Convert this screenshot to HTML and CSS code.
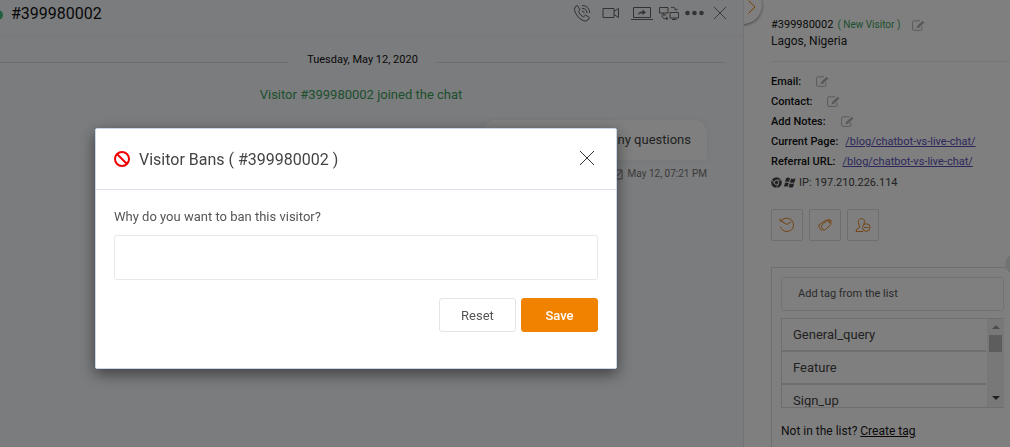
FILE: index.html
```
<!DOCTYPE html>
<html lang="en">
<head>
    <meta charset="UTF-8">
    <meta name="viewport" content="width=device-width, initial-scale=1.0">
    <title>Visitor Bans</title>
    <link rel="stylesheet" href="styles.css">
</head>
<body>
    <!-- shared icons -->
    <svg class="sprite" aria-hidden="true">
        <symbol id="edit" viewBox="0 0 13 11">
            <path d="M8 .8H2Q.6.8.6 2.200V9Q.6 10.400 2 10.400H8.500Q9.900 10.400 9.900 9V6.500" fill="none" stroke="currentColor"/>
            <path d="M4.600 8.200L5.100 6L10.600.7L12.500 2.500L7 7.700Z" fill="currentColor"/>
        </symbol>
        <symbol id="close" viewBox="0 0 16 16">
            <path d="M1 1L15 15M15 1L1 15" fill="none" stroke="currentColor"/>
        </symbol>
    </svg>

    <div class="page">
        <div class="chat">
            <header class="chat-head">
                <span class="online"></span>
                <h1>#399980002</h1>
                <div class="tools">
                    <button type="button" aria-label="Call"><svg width="18" height="18" viewBox="0 0 18 18"><path d="M4.500 1.500L2 3Q.5 5 2.500 9Q5 14.500 10 16.500Q13.500 18 15 16L16.500 13.500L12.500 11L10.500 13Q7 11.500 5.500 7.500L7 6ZM9 7Q11 7 11.200 9.200M9 4.300Q13.500 4.300 14 9M9 1.500Q16 1.500 16.800 9"/></svg></button>
                    <button type="button" aria-label="Video"><svg width="18" height="12" viewBox="0 0 18 12"><path d="M1 1.500H12V10.500H1ZM12 4.500L16.500 1.500V10.500L12 7.500"/></svg></button>
                    <button type="button" aria-label="Share screen"><svg width="22" height="14" viewBox="0 0 22 14"><path d="M2.500 11.500V1.500H19.500V11.500ZM0 13.500H22"/><path class="solid" d="M7 9Q7 5.500 11.500 5.500V3.500L15 6.500L11.500 9V7.300Q8.500 7.200 7 9Z"/></svg></button>
                    <button type="button" aria-label="Transfer"><svg width="20" height="14" viewBox="0 0 20 14"><path d="M.5 1.500H9V7H.5ZM4.700 7V8.800M2.500 9H7M11 6.500H19.500V12H11ZM15.200 12V13.400M13 13.500H17.500M12 1.500Q16 .5 17 4M15.300 2.800L17 4.500L18.500 2.800M3 10Q4 13.500 8.500 12.500M7 11L9 12.500L7 14"/></svg></button>
                    <button type="button" aria-label="More"><svg width="20" height="6" viewBox="0 0 20 6"><circle class="solid" cx="2.500" cy="3" r="2.300"/><circle class="solid" cx="9.500" cy="3" r="2.300"/><circle class="solid" cx="16.500" cy="3" r="2.300"/></svg></button>
                    <button type="button" aria-label="Close chat"><svg width="14" height="14"><use href="#close"/></svg></button>
                </div>
            </header>
            <div class="messages">
                <div class="date">Tuesday, May 12, 2020</div>
                <p class="joined">Visitor #399980002 joined the chat</p>
                <div class="bubble">Feel free to ask me any questions</div>
                <div class="time">
                    <svg width="10" height="11" viewBox="0 0 10 11"><path d="M1 1H9V10H1ZM3 4L5 6.500L8 2" fill="none" stroke="currentColor"/></svg>
                    May 12, 07:21 PM
                </div>
            </div>
        </div>

        <aside class="side">
            <button type="button" class="toggle" aria-label="Hide details"><svg width="8" height="14" viewBox="0 0 8 14"><path d="M.6.6L7 7L.6 13.400"/></svg></button>
            <div class="visitor">
                <div class="name"><b>#399980002</b><span>( New Visitor )</span><svg class="edit"><use href="#edit"/></svg></div>
                <div class="place">Lagos, Nigeria</div>
            </div>
            <div class="details">
                <div class="row"><b>Email:</b><svg class="edit"><use href="#edit"/></svg></div>
                <div class="row"><b>Contact:</b><svg class="edit"><use href="#edit"/></svg></div>
                <div class="row"><b>Add Notes:</b><svg class="edit"><use href="#edit"/></svg></div>
                <div class="row"><b>Current Page:</b><a href="#">/blog/chatbot-vs-live-chat/</a></div>
                <div class="row"><b>Referral URL:</b><a href="#">/blog/chatbot-vs-live-chat/</a></div>
                <div class="row ip">
                    <svg width="11" height="11" viewBox="0 0 11 11"><circle cx="5.500" cy="5.500" r="5.300" fill="currentColor"/><path d="M5.500 3H10.500M3.300 6.700L1 2.700M7.700 6.700L5.200 10.800" stroke="#fff" stroke-width=".8"/><circle cx="5.500" cy="5.500" r="2.200" fill="currentColor" stroke="#fff"/></svg>
                    <svg width="12" height="11" viewBox="0 0 12 11"><path d="M2 1.200Q4 0 6 1.200L5 5Q3 4 1 5ZM7 1.500Q9 2.500 11.500 1.300L10.500 5.200Q8.500 6.200 6 5.200ZM.8 6Q2.800 5 4.700 6L3.700 9.700Q2 8.700 0 9.700ZM5.700 6.300Q8 7.300 10.200 6.300L9.200 10Q7 11.200 4.700 10Z" fill="currentColor"/></svg>
                    <span>IP:</span><span>197.210.226.114</span>
                </div>
            </div>
            <div class="actions">
                <button type="button" aria-label="History"><svg viewBox="0 0 16 16"><path d="M2 3.500Q5 .8 8.500 1.200Q14.300 2 14.500 8Q14.200 14 8 14.500Q3 14.300 1.300 9.500M1 1.500L1.300 4.300L4.300 4.300M3.500 5L8 7.500L12.500 4.500"/></svg></button>
                <button type="button" aria-label="Tags"><svg viewBox="0 0 16 16"><path d="M5.500 7.500L10 3.500L14 3L13.800 7.500L8.500 12.500Q7 13.500 6 12.500L4.700 10.500Q4 9 5.500 7.500ZM5.500 13.300L3.500 12.700Q1.300 9.500 1.800 8L8 3.800L12 2.500"/><circle cx="12.300" cy="5" r=".7"/></svg></button>
                <button type="button" aria-label="Ban visitor"><svg viewBox="0 0 16 16"><path d="M8 14.500H1Q1 11.500 4.500 10.500Q5 9.500 4 8Q1.800 2 6.500 1.500Q11 1.800 8.800 7.500"/><circle cx="11.300" cy="10.500" r="3.800"/><path d="M9 10.500H13.600"/></svg></button>
            </div>
            <div class="tags">
                <span class="knob"></span>
                <input type="text" class="tag-input" placeholder="Add tag from the list" aria-label="Add tag from the list">
                <div class="tag-list">
                    <ul>
                        <li>General_query</li>
                        <li>Feature</li>
                        <li>Sign_up</li>
                    </ul>
                    <div class="scroll">
                        <i class="up"></i>
                        <i class="thumb"></i>
                        <i class="down"></i>
                    </div>
                </div>
                <p class="create">Not in the list? <a href="#">Create tag</a></p>
            </div>
        </aside>
    </div>

    <div class="overlay">
        <form class="modal" role="dialog" aria-labelledby="ban-title">
            <div class="modal-head">
                <svg width="16" height="16" viewBox="0 0 16 16"><path d="M3 3L13 13" stroke="#f00000" stroke-width="2"/><circle cx="8" cy="8" r="7" fill="none" stroke="#f00000" stroke-width="2"/></svg>
                <h2 id="ban-title">Visitor Bans ( #399980002 )</h2>
                <button type="button" class="close" aria-label="Close"><svg width="16" height="16"><use href="#close"/></svg></button>
            </div>
            <div class="modal-body">
                <label for="reason">Why do you want to ban this visitor?</label>
                <input type="text" id="reason">
                <div class="buttons">
                    <button type="reset" class="btn">Reset</button>
                    <button type="submit" class="btn save">Save</button>
                </div>
            </div>
        </form>
    </div>
</body>
</html>
```
FILE: styles.css
```
* {
    box-sizing: border-box;
}
body {
    margin: 0;
    overflow: hidden;
    font-family: Roboto, "Liberation Sans", sans-serif;
    font-size: 13px;
    color: #444;
}
h1, h2, p, ul {
    margin: 0;
    padding: 0;
}
button, input {
    font-family: inherit;
}
button {
    padding: 0;
    border: 0;
    background: none;
    cursor: pointer;
}
b {
    font-weight: 500;
}
svg {
    display: block;
    flex: none;
}
.sprite {
    position: absolute;
    width: 0;
    height: 0;
}
.page {
    display: grid;
    grid-template-columns: 1fr 267px;
    min-height: 100vh;
}

/* chat */
.chat {
    background: #f6f8fb;
}
.chat-head {
    display: flex;
    align-items: center;
    height: 38px;
    padding: 0 16px 9px 0;
    border-bottom: 3px solid #f4f4f8;
}
.online {
    width: 10px;
    height: 10px;
    margin: 4px 8px 0 -7px;
    border-radius: 50%;
    background: #3fbf7f;
}
.chat-head h1 {
    font-size: 16px;
    font-weight: 400;
    color: #111;
}
.tools {
    display: flex;
    align-items: center;
    gap: 6px;
    margin-left: auto;
}
.tools button {
    color: #666;
}
.tools button:nth-child(-n+2) {
    margin-right: 5px;
}
.tools button:last-child {
    margin-left: 2px;
}
.tools path {
    fill: none;
    stroke: currentColor;
}
.tools .solid {
    fill: currentColor;
    stroke: none;
}
.messages {
    display: flex;
    flex-direction: column;
    padding: 14px 36px 0 0;
}
.date {
    display: flex;
    align-items: center;
    gap: 18px;
    margin-right: -18px;
    padding-right: 8px;
    font-size: 11px;
    line-height: 16px;
    color: #111;
}
.date::before,
.date::after {
    content: "";
    flex: 1;
    height: 1px;
    margin-top: 4px;
    background: #dddde0;
}
.date::after {
    margin-right: -8px;
}
.joined {
    margin: 18px 0 17px;
    padding-left: 15px;
    line-height: 17px;
    text-align: center;
    color: #3a9f5c;
}
.bubble {
    align-self: flex-end;
    padding: 10px 16px;
    border-radius: 14px 14px 0 14px;
    background: #fff;
    box-shadow: 0 0 6px rgba(0, 0, 0, .05);
    line-height: 20px;
}
.time {
    display: flex;
    align-self: flex-end;
    align-items: center;
    gap: 5px;
    margin-top: 6px;
    font-size: 10px;
    line-height: 16px;
    color: #777;
}

/* visitor details */
.side {
    position: relative;
    overflow: hidden;
    padding-left: 27px;
    border-left: 1px solid #e4e4ec;
    background: #fff;
    font-size: 12px;
    color: #222;
}
.toggle {
    position: absolute;
    top: -14px;
    left: -20px;
    width: 38px;
    height: 38px;
    padding: 4px 0 0 24px;
    border-radius: 50%;
    background: #fff;
    box-shadow: 0 1px 3px rgba(0, 0, 0, .5);
}
.toggle path {
    fill: none;
    stroke: #f08200;
}
.visitor {
    padding: 17px 0 12px;
    border-bottom: 1px solid #eee;
}
.visitor div {
    line-height: 16px;
}
.name {
    display: flex;
    align-items: center;
    font-size: 11px;
}
.name b {
    font-weight: 400;
    color: #111;
}
.name span {
    margin: 0 12px 0 4px;
    font-size: 10px;
    color: #3a9f5c;
}
.edit {
    width: 13px;
    height: 11px;
    color: #b4b4b4;
}
.details {
    padding-top: 9px;
}
.row {
    display: flex;
    align-items: center;
    height: 20px;
    font-size: 11px;
}
.row b {
    color: #111;
}
.row .edit {
    margin-left: 15px;
}
.row a {
    margin-left: 7px;
    color: #5a4fb5;
}
.ip {
    gap: 2px;
    height: 22px;
    color: #444;
}
.ip span {
    margin-left: 1px;
}
.actions {
    display: flex;
    gap: 6px;
    padding: 16px 0 26px;
}
.actions button {
    width: 32px;
    height: 32px;
    border: 1px solid #ddd;
    border-radius: 2px;
}
.actions svg {
    width: 16px;
    height: 16px;
    margin: auto;
    fill: none;
    stroke: #e88a2a;
}
.tags {
    position: relative;
    padding: 9px 6px 16px 9px;
    border: 1px solid #ddd;
    border-right: 0;
    border-bottom: 0;
}
.knob {
    position: absolute;
    top: -14px;
    right: -15px;
    width: 20px;
    height: 20px;
    border-radius: 50%;
    background: #e3e7e6;
}
.tag-input {
    width: 100%;
    height: 34px;
    padding: 0 16px 2px;
    border: 1px solid #e4e4e4;
    border-radius: 3px;
    background: #fff;
    font-size: 11px;
}
.tag-input::placeholder {
    color: #555;
}
.tag-list {
    display: flex;
    height: 90px;
    margin-top: 7px;
    overflow: hidden;
    border: 1px solid #ddd;
    border-right: 0;
}
.tag-list ul {
    flex: 1;
    padding-right: 1px;
    list-style: none;
}
.tag-list li {
    height: 33px;
    padding-left: 11px;
    border-bottom: 2px solid #ddd;
    font-size: 13px;
    line-height: 31px;
    color: #444;
}
.tag-list li:last-child {
    border-bottom: 0;
}
.scroll {
    display: flex;
    flex-direction: column;
    align-items: center;
    width: 17px;
    padding: 6px 0 7px;
    background: #f1f1f1;
}
.up,
.down {
    border: 4px solid transparent;
    border-top: 0;
    border-bottom-color: #999;
}
.thumb {
    width: 13px;
    height: 17px;
    margin: 6px 0 auto;
    background: #bbb;
}
.down {
    border-top: 4px solid #444;
    border-bottom: 0;
}
.create {
    margin-top: 15px;
    font-size: 12px;
    line-height: 16px;
}
.create a {
    color: #111;
}

/* ban dialog */
.overlay {
    position: fixed;
    inset: 0;
    padding: 128px 95px;
    background: rgba(0, 0, 0, .5);
}
.modal {
    max-width: 522px;
    border: 1px solid #c9d6e8;
    border-radius: 2px;
    background: #fff;
    box-shadow: 0 5px 15px rgba(0, 0, 0, .5);
}
.modal-head {
    display: flex;
    align-items: center;
    gap: 9px;
    height: 61px;
    padding: 0 21px 0 18px;
    border-bottom: 1px solid #dce3ee;
}
.modal-head h2 {
    font-size: 16px;
    font-weight: 400;
    color: #444;
}
.close {
    margin-left: auto;
    padding-bottom: 2px;
    color: #333;
}
.modal-body {
    padding: 18px 18px 36px;
}
.modal-body label {
    display: block;
    line-height: 18px;
    color: #555;
}
.modal-body input {
    width: 100%;
    height: 45px;
    margin-top: 9px;
    padding: 0 12px;
    border: 1px solid #e8e8e8;
    border-radius: 3px;
}
.buttons {
    display: flex;
    justify-content: flex-end;
    gap: 5px;
    margin-top: 18px;
}
.btn {
    width: 77px;
    height: 34px;
    border: 1px solid #e4e4e4;
    border-radius: 3px;
    font-size: 13px;
    color: #555;
}
.save {
    border-color: #f08200;
    background: #f08200;
    font-weight: 500;
    color: #fff;
}
```
